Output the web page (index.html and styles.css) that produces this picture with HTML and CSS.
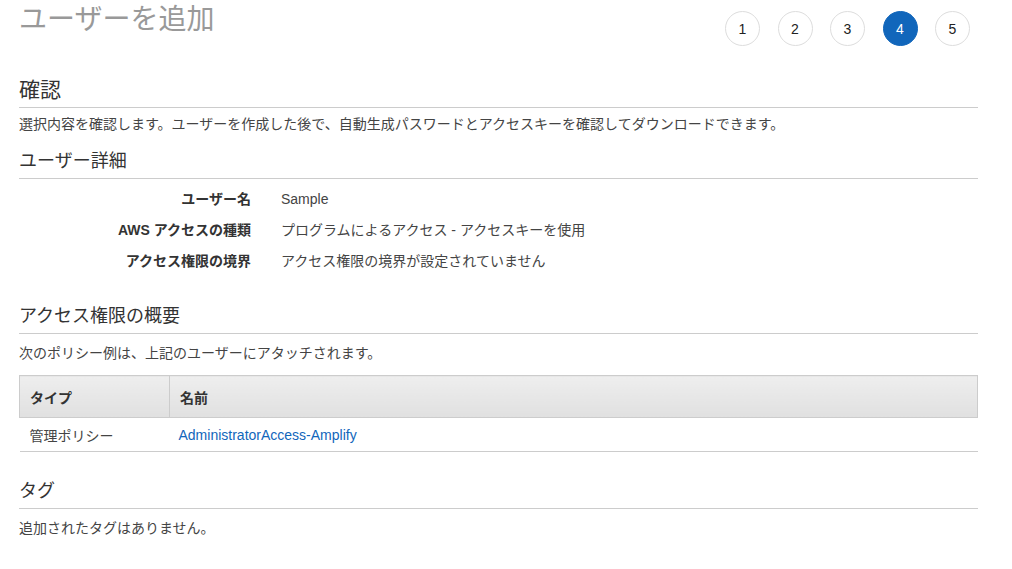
FILE: index.html
```html
<!DOCTYPE html>
<html lang="ja">
<head>
<meta charset="utf-8">
<title>ユーザーを追加</title>
<link rel="stylesheet" href="styles.css">
</head>
<body>
<div class="page">
  <div class="header">
    <h1 class="title">ユーザーを追加</h1>
    <ol class="steps">
      <li class="step">1</li>
      <li class="step">2</li>
      <li class="step">3</li>
      <li class="step active">4</li>
      <li class="step">5</li>
    </ol>
  </div>

  <h2 class="heading heading-main">確認</h2>
  <p class="text text-first">選択内容を確認します。ユーザーを作成した後で、自動生成パスワードとアクセスキーを確認してダウンロードできます。</p>

  <h2 class="heading heading-details">ユーザー詳細</h2>
  <dl class="details">
    <div class="detail-row"><dt>ユーザー名</dt><dd>Sample</dd></div>
    <div class="detail-row"><dt>AWS アクセスの種類</dt><dd>プログラムによるアクセス - アクセスキーを使用</dd></div>
    <div class="detail-row"><dt>アクセス権限の境界</dt><dd>アクセス権限の境界が設定されていません</dd></div>
  </dl>

  <h2 class="heading heading-perm">アクセス権限の概要</h2>
  <p class="text">次のポリシー例は、上記のユーザーにアタッチされます。</p>

  <table class="policy-table">
    <thead>
      <tr><th class="col-type">タイプ</th><th>名前</th></tr>
    </thead>
    <tbody>
      <tr><td>管理ポリシー</td><td><a class="link" href="#">AdministratorAccess-Amplify</a></td></tr>
    </tbody>
  </table>

  <h2 class="heading heading-tags">タグ</h2>
  <p class="text">追加されたタグはありません。</p>
</div>
</body>
</html>
```

FILE: styles.css
```css
* { box-sizing: border-box; }

body {
  margin: 0;
  background: #fff;
  font-family: "Liberation Sans", "Noto Sans CJK JP", sans-serif;
  font-size: 14px;
  color: #444;
}

.page {
  width: 997px;
  padding-left: 19px;
  padding-right: 19px;
}

.header {
  display: flex;
  justify-content: space-between;
  align-items: flex-start;
  height: 77px;
}

.title {
  margin: 0;
  font-size: 28px;
  line-height: 40px;
  font-weight: normal;
  color: #999;
}

.steps {
  list-style: none;
  margin: 11px 8px 0 0;
  padding: 0;
  display: flex;
  gap: 17.5px;
}

.step {
  width: 35px;
  height: 35px;
  border: 1px solid #ddd;
  border-radius: 50%;
  display: flex;
  align-items: center;
  justify-content: center;
  font-size: 14px;
  color: #222;
  background: #fff;
}

.step.active {
  background: #1166bb;
  border-color: #1166bb;
  color: #fff;
}

.heading {
  margin: 0;
  font-size: 18px;
  line-height: 26px;
  font-weight: normal;
  color: #333;
  padding-bottom: 4px;
  border-bottom: 1px solid #ccc;
}

.heading-main {
  font-size: 21px;
}

.heading-details { margin-top: 14px; }
.heading-perm { margin-top: 32px; }
.heading-tags { margin-top: 26px; }

.text {
  margin: 9px 0 0;
  line-height: 20px;
}

.text-first { margin-top: 6px; }

.details {
  margin: 10px 0 0;
  display: flex;
  flex-direction: column;
  gap: 11px;
}

.detail-row {
  display: flex;
  gap: 30px;
  line-height: 20px;
}

.detail-row dt {
  width: 232px;
  text-align: right;
  font-weight: bold;
  color: #333;
}

.detail-row dd {
  margin: 0;
  color: #444;
}

.policy-table {
  margin-top: 12px;
  width: 100%;
  border-collapse: collapse;
}

.policy-table th {
  height: 42px;
  padding: 0 10px;
  text-align: left;
  font-weight: bold;
  color: #333;
  background: linear-gradient(#eeeeee, #e0e0e0);
  border: 1px solid #ccc;
}

.policy-table .col-type { width: 150px; }

.policy-table td {
  height: 34px;
  padding: 0 10px;
  border-bottom: 1px solid #ccc;
  color: #444;
}

.policy-table td:last-child { padding-left: 9px; }

.link {
  color: #1166bb;
  text-decoration: none;
}
```
